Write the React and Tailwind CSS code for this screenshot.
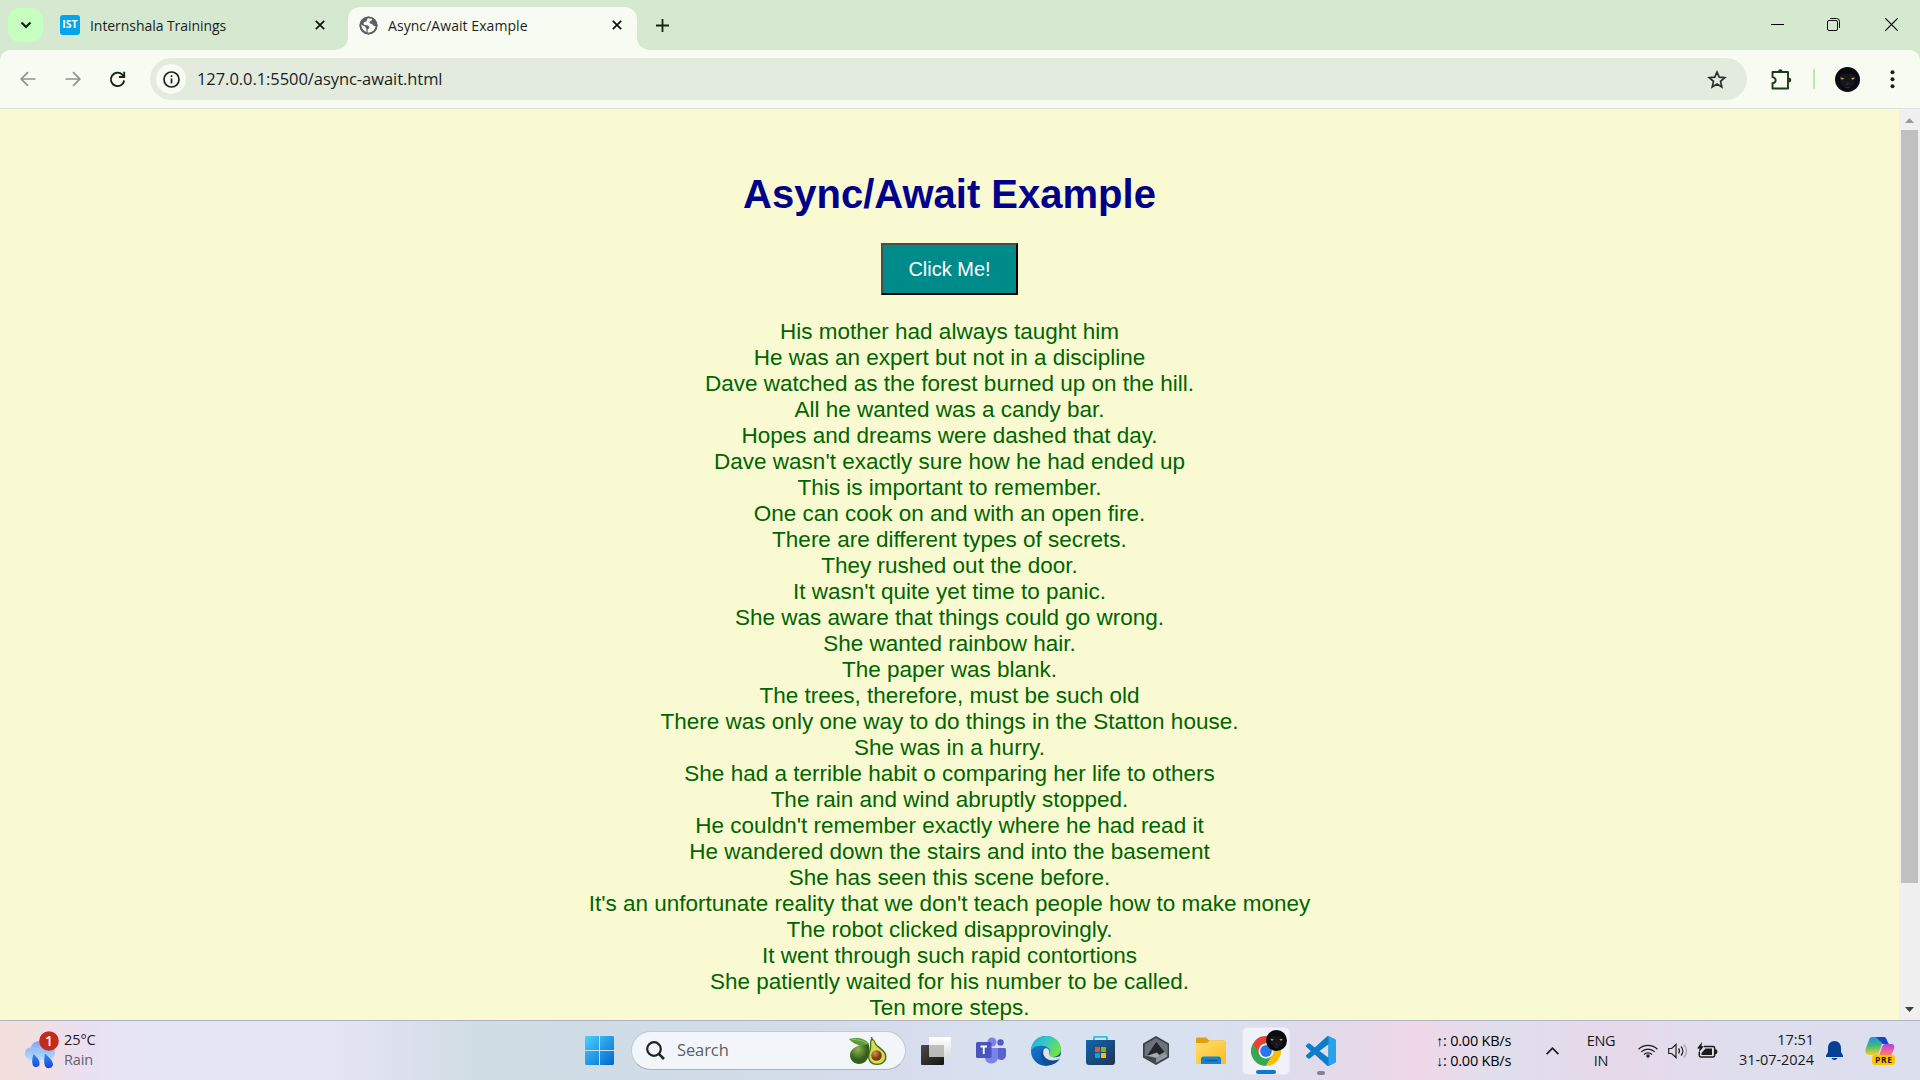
const LINES = [
  "His mother had always taught him",
  "He was an expert but not in a discipline",
  "Dave watched as the forest burned up on the hill.",
  "All he wanted was a candy bar.",
  "Hopes and dreams were dashed that day.",
  "Dave wasn't exactly sure how he had ended up",
  "This is important to remember.",
  "One can cook on and with an open fire.",
  "There are different types of secrets.",
  "They rushed out the door.",
  "It wasn't quite yet time to panic.",
  "She was aware that things could go wrong.",
  "She wanted rainbow hair.",
  "The paper was blank.",
  "The trees, therefore, must be such old",
  "There was only one way to do things in the Statton house.",
  "She was in a hurry.",
  "She had a terrible habit o comparing her life to others",
  "The rain and wind abruptly stopped.",
  "He couldn't remember exactly where he had read it",
  "He wandered down the stairs and into the basement",
  "She has seen this scene before.",
  "It's an unfortunate reality that we don't teach people how to make money",
  "The robot clicked disapprovingly.",
  "It went through such rapid contortions",
  "She patiently waited for his number to be called.",
  "Ten more steps.",
];

function CloseX({ className }) {
  return (
    <svg className={className} width="10" height="10" viewBox="0 0 10 10" stroke="#111" strokeWidth="1.7" fill="none">
      <path d="M.8.8l8.400 8.400M9.200.8L.8 9.200" />
    </svg>
  );
}

function Panther({ size }) {
  return (
    <svg width={size} height={size} viewBox="0 0 25 25">
      <circle cx="12.5" cy="12.5" r="12.5" fill="#0b0c12" />
      <path d="M5 10c2-3 5-4 7.500-2.500C15 6 18 7 20 10l-1 7-6.500 5L6 17z" fill="#16171e" />
      <path d="M5 10.500l4 .5-1 1.500H6.500z" fill="#c99a4e" />
      <path d="M20 10.500l-4 .5 1 1.500h1.500z" fill="#c99a4e" />
      <path d="M10.500 16.500h4l-2 1.800zM9 20c2 1 5 1 7 0" fill="#34353c" />
    </svg>
  );
}

function TabStrip() {
  return (
    <div className="flex h-[50px] bg-[#d5e8d0] pl-2 text-[14px] text-[#1b1f1b]">
      <div className="mt-2 flex h-[34px] w-[35px] items-center justify-center rounded-[12px] bg-[#c7ffc0]">
        <svg width="12" height="8" viewBox="0 0 12 8" fill="none" stroke="#0b200b" strokeWidth="2.200">
          <path d="M1.500 1.500L6 6l4.500-4.500" />
        </svg>
      </div>
      <div className="ml-[17px] flex h-[50px] w-[288px] items-center">
        <div className="flex size-5 items-center justify-center rounded-[3px] bg-[#00a5ec] font-['Open_Sans',sans-serif] text-[10.500px] font-bold text-white">
          IST
        </div>
        <span className="ml-[10px] flex-1 whitespace-nowrap tracking-[-0.060px]">Internshala Trainings</span>
        <CloseX className="mr-[23px]" />
      </div>
      <div className="relative flex h-[50px] w-[289px] items-end">
        <svg className="absolute bottom-0 left-[-14px]" width="317" height="43" viewBox="0 0 317 43" fill="#f8fbf2">
          <path d="M0 43c8 0 14-5 14-13V13C14 5 19 0 27 0h263c8 0 13 5 13 13v17c0 8 6 13 14 13z" />
        </svg>
        <div className="relative flex h-[50px] w-full items-center pl-[11px] pr-[15px]">
          <svg width="19" height="19" viewBox="0 0 19 19">
            <circle cx="9.500" cy="9.500" r="9" fill="#5c6067" />
            <path d="M9 2.200c-1.500 1-.5 2.300-2 3.300-1.300.8-2.500.5-2.500 2 0 1.300 1.200 1.700 2.600 1.700 1.800 0 3.200.6 3.200 2.100 0 1.400-1.700 1.600-1.700 3v2.400c4.500.3 7.800-2.700 8.100-6.600-1.500.3-2.400-.3-2.900-1.400-.7-1.400-2.700-.3-3.200-1.600-.4-1.200.8-2 2-2.600.6-.4.8-1.200.6-1.900C11.800 2.300 10.500 2 9 2.200z" fill="#f8fbf2" />
            <path d="M2 8.500c.3 4 2.800 6.500 5.500 7.500v-2.500c0-1-1-1.500-1-2.500C5.300 9.800 3.500 9.500 2 8.500z" fill="#f8fbf2" />
            <circle cx="9.500" cy="9.500" r="8.200" fill="none" stroke="#5c6067" strokeWidth="1.600" />
          </svg>
          <span className="ml-[10px] flex-1 whitespace-nowrap tracking-[0.060px]">Async/Await Example</span>
          <CloseX />
        </div>
      </div>
      <svg className="ml-[19px] mt-[19px]" width="13" height="13" viewBox="0 0 13 13" stroke="#12260f" strokeWidth="1.800">
        <path d="M6.500 0v13M0 6.500h13" />
      </svg>
      <div className="ml-auto flex h-[50px] items-center pb-px pr-[22px]">
        <svg className="mr-[43px]" width="13" height="13" viewBox="0 0 13 13"><path d="M0 6.500h13" stroke="#000" /></svg>
        <svg className="mr-[45px]" width="13" height="13" viewBox="0 0 13 13" fill="none" stroke="#111">
          <rect x=".5" y="2.500" width="10" height="10" rx="1.500" />
          <path d="M3 .5h6.500a3 3 0 013 3V10" />
        </svg>
        <svg width="13" height="13" viewBox="0 0 13 13" stroke="#000" strokeWidth="1.200"><path d="M.3.3l12.400 12.400M12.700.3L.3 12.700" /></svg>
      </div>
    </div>
  );
}

function Toolbar() {
  return (
    <div className="h-[59px] bg-[#d5e8d0]">
      <div className="flex h-[59px] items-center rounded-t-[10px] border-b border-[#dbe2d8] bg-[#f8fbf2] pl-5 pr-[25px]">
        <svg width="16" height="16" viewBox="0 0 16 16" fill="none" stroke="#8f948d" strokeWidth="1.700"><path d="M15.500 8H1.500M8 1.200L1.200 8 8 14.800" /></svg>
        <svg className="ml-[29px]" width="16" height="16" viewBox="0 0 16 16" fill="none" stroke="#8f948d" strokeWidth="1.700"><path d="M.5 8h14M8 1.200L14.800 8 8 14.800" /></svg>
        <svg className="ml-[28px]" width="17" height="17" viewBox="0 0 17 17" fill="none" stroke="#12260f" strokeWidth="1.900"><path d="M15.200 9.500A6.700 6.700 0 1 1 13.300 3.600L15 5.500" /><path d="M15.200.8V6H10" /></svg>
        <div className="ml-[24px] flex h-[42px] w-[1597px] items-center rounded-full bg-[#e3ebdf] pl-[6px] pr-[20px]">
          <div className="flex size-[30px] items-center justify-center rounded-full bg-[#f8fbf2]">
            <svg width="17" height="17" viewBox="0 0 17 17" fill="none" stroke="#1c211c" strokeWidth="1.700"><circle cx="8.500" cy="8.500" r="7.500" /><path d="M8.500 7.500v5M8.500 4.300v1.800" /></svg>
          </div>
          <span className="ml-[11px] flex-1 pt-px text-[16.500px] tracking-[-0.060px] text-[#1b1f1b]">127.0.0.1:5500/async-await.html</span>
          <svg width="20" height="19" viewBox="0 0 20 19" fill="none" stroke="#2a302a" strokeWidth="1.700"><path d="M10 2l2.200 5.200 5.600.5-4.300 3.700 1.300 5.500-4.800-2.900-4.800 2.900 1.300-5.500L2.200 7.700l5.600-.5z" /></svg>
        </div>
        <svg className="ml-[24px]" width="21" height="21" viewBox="0 0 21 21" fill="none" stroke="#1c3a1a" strokeWidth="1.900" strokeLinejoin="round">
          <path d="M1.500 3h15.500v16.500H1.500v-5.200c4.200-.8 4.200-5.400 0-6.200z" />
          <path d="M7 2.500a2.300 2.300 0 014.600 0zM18 8.800a2.300 2.300 0 010 4.600z" fill="#1c3a1a" stroke="none" />
        </svg>
        <div className="ml-[21px] h-5 w-[2px] bg-[#aef0a6]" />
        <div className="ml-[20px]"><Panther size={25} /></div>
        <svg className="ml-auto" width="5" height="19" viewBox="0 0 5 19" fill="#12260f"><circle cx="2.500" cy="2.300" r="2" /><circle cx="2.500" cy="9.300" r="2" /><circle cx="2.500" cy="16.300" r="2" /></svg>
      </div>
    </div>
  );
}

function PageContent() {
  return (
    <div className="flex h-[911px] overflow-hidden bg-[#fafad2]">
      <main className="flex w-[1899px] flex-col items-center font-['Liberation_Sans',Arial,sans-serif]">
        <h1 className="mt-[62px] shrink-0 text-[40px] font-bold leading-[46px] text-[#00008b]">Async/Await Example</h1>
        <button className="mt-[26px] h-[52px] w-[137px] shrink-0 border-2 border-b-black border-l-[#4c4c4c] border-r-black border-t-[#4c4c4c] bg-[#008b8b] text-[20px] text-white">
          Click Me!
        </button>
        <div className="mt-[24px] shrink-0 whitespace-nowrap text-center text-[22.500px] leading-[26px] text-[#006400]">
          {LINES.map((line) => (
            <p key={line}>{line}</p>
          ))}
        </div>
      </main>
      <div className="flex w-[21px] flex-col items-center bg-[#f0f0f0] pt-[9px]">
        <svg width="9" height="5" viewBox="0 0 9 5" fill="#9a9a9a"><path d="M4.500 0L9 5H0z" /></svg>
        <div className="mt-[7px] h-[753px] w-[17px] bg-[#c0c0c0]" />
        <svg className="mb-[8px] mt-auto" width="9" height="5" viewBox="0 0 9 5" fill="#404040"><path d="M0 0h9L4.500 5z" /></svg>
      </div>
    </div>
  );
}

function Weather() {
  return (
    <div className="flex h-full w-[150px] items-center pb-[2px] pl-[25px]">
      <svg width="35" height="38" viewBox="0 0 35 38">
        <defs>
          <linearGradient id="cloud" x2="0" y2="1"><stop stopColor="#7fa5ea" /><stop offset="1" stopColor="#b5dcff" /></linearGradient>
          <linearGradient id="drop" x2="0" y2="1"><stop stopColor="#2b8bf2" /><stop offset="1" stopColor="#1747e0" /></linearGradient>
        </defs>
        <path d="M7 29c-4 0-7-2.500-7-6.500S3 16.500 6 16.500C7 9 18 8 21 15c5-1 9 2 9 6.500S27 29 23 29z" fill="url(#cloud)" />
        <path d="M4 18c4-2 9-1 12 3M14 20c3-4 10-5 15-1" fill="none" stroke="#9dc4f6" strokeWidth="1.500" />
        <path d="M8.500 23c3 3 6 5.500 6 9a3.500 3.500 0 01-7 1c-.8-3 0-6.500 1-10zM20 22.500c4 4 8 7 8 11a4.300 4.300 0 01-8 1.500c-1.200-3-.8-8 0-12.500z" fill="url(#drop)" />
        <circle cx="24" cy="10" r="9.800" fill="#c42b1c" />
        <text x="24" y="15" fontSize="14" fontWeight="600" textAnchor="middle" fill="#fff" fontFamily="Open Sans, sans-serif">1</text>
      </svg>
      <div className="ml-[4px] text-[14.500px] leading-5 tracking-[-0.100px]">
        <div>25°C</div>
        <div className="text-[#62626c]">Rain</div>
      </div>
    </div>
  );
}

function Avocado() {
  return (
    <svg width="38" height="28" viewBox="0 0 38 28">
      <defs>
        <radialGradient id="avo" cx=".4" cy=".3"><stop stopColor="#8eb552" /><stop offset="1" stopColor="#355e1c" /></radialGradient>
        <radialGradient id="pit" cx=".35" cy=".3"><stop stopColor="#d59358" /><stop offset="1" stopColor="#7d3912" /></radialGradient>
      </defs>
      <path d="M1 18C1 10 13 7 19 6c3 5 2 21-9 21-5 0-9-4-9-9z" fill="url(#avo)" />
      <path d="M0 2c8-2 16-1 20 5-8 3-15 1-20-5z" fill="#5c9b3a" /><path d="M3 2.500c6 0 11 1 15 4" stroke="#96c665" fill="none" />
      <path d="M22.500 1.500c1.500 0 3 1.500 4 4 1.500 4 11 7 11 14 0 5.500-4 8.500-9.500 8.500s-9-3.500-9-8.500c0-4 2-6 2-10s0-7 1.500-8z" fill="#416e20" />
      <path d="M23 3c1.300 0 2 1.500 2.700 3.500 1.600 4.500 10.300 7 10.300 13 0 4.700-3.500 7.200-8 7.200s-7.700-3-7.700-7.200c0-3.500 2-6 2-10 0-3-.3-5.500.7-6.500z" fill="#d9dc4e" />
      <circle cx="27.500" cy="18.500" r="5.300" fill="url(#pit)" /><path d="M22.500 0l.8 3.500" stroke="#8a5a2c" strokeWidth="1.500" />
    </svg>
  );
}

function TaskIcons() {
  return (
    <div className="flex h-full items-center">
      <svg width="29" height="29" viewBox="0 0 29 29">
        <defs><linearGradient id="win" x2="1" y2="1"><stop stopColor="#4ad0ff" /><stop offset="1" stopColor="#0067cc" /></linearGradient></defs>
        <path d="M1 0h13v14H0V1zM15 0h13l1 1v13H15zM0 15h14v14H1l-1-1zM15 15h14v13l-1 1H15z" fill="url(#win)" />
      </svg>
      <div className="ml-[17px] flex h-[39px] w-[275px] items-center rounded-full border border-[#c0c9d6] border-b-[#a9b2c2] bg-[#f2f5f9] pl-[14px] pr-[18px]">
        <svg width="19" height="19" viewBox="0 0 19 19" fill="none" stroke="#222" strokeWidth="2.200"><circle cx="8" cy="8" r="6.800" /><path d="M12.800 12.800l5.200 5.200" strokeWidth="2.600" /></svg>
        <span className="ml-[12px] flex-1 text-[16.500px] tracking-[-0.100px] text-[#5c5f63]">Search</span>
        <Avocado />
      </div>
      <svg className="ml-[15px]" width="30" height="28" viewBox="0 0 30 28">
        <defs>
          <linearGradient id="tvd" x2="1" y2="1"><stop stopColor="#4a4a48" /><stop offset="1" stopColor="#151515" /></linearGradient>
          <linearGradient id="tvl" x2="0" y2="1"><stop stopColor="#fff" /><stop offset="1" stopColor="#ddd" /></linearGradient>
        </defs>
        <rect y="8" width="23" height="20" rx="1" fill="url(#tvd)" />
        <rect x="8" width="22" height="20" rx="1" fill="url(#tvl)" />
        <path d="M8 8h15v12H8z" fill="#aaa" opacity=".7" />
      </svg>
      <svg className="ml-[25px]" width="30" height="27" viewBox="0 0 30 27">
        <circle cx="16" cy="5" r="4.500" fill="#7b83eb" /><circle cx="24.500" cy="5.500" r="3.200" fill="#5059c9" />
        <path d="M20 11h8.500c1 0 1.500.5 1.500 1.500V18c0 6-7 6-9 3z" fill="#5b62cf" />
        <path d="M9 11h13v9c0 8-12 9-13 1z" fill="#7b83eb" />
        <rect y="5" width="15.500" height="16" rx="1.500" fill="#4b53bc" />
        <path d="M4.500 9.500h6.500M7.750 9.500v7.500" stroke="#fff" strokeWidth="1.900" />
      </svg>
      <svg className="ml-[25px]" width="30" height="30" viewBox="0 0 30 30">
        <defs>
          <linearGradient id="edg" x2="1" y2=".5"><stop stopColor="#1fa6e6" /><stop offset=".5" stopColor="#35c9c2" /><stop offset="1" stopColor="#71e04c" /></linearGradient>
          <linearGradient id="edb" x2=".6" y2="1"><stop stopColor="#1b87dc" /><stop offset="1" stopColor="#0b4fa0" /></linearGradient>
        </defs>
        <circle cx="15" cy="15" r="15" fill="url(#edb)" />
        <path d="M0 14C1 5 7 0 15 0c9 0 15 6 15 13 0 5-4 8-8 8-3 0-5-1-4-3 2-2 1-7-5-8C8 9 3 10 0 14z" fill="url(#edg)" />
        <path d="M12 13c-5 6-1 16 9 15.500 3-.5 6-3 8-6-8 4-15 0-17-9.500z" fill="#124f91" />
        <path d="M12.500 14c2-4 7-1 5.500 3.500 0 4 6 5 11.500 2.500L28 23c-8 4-18-1-15.500-9z" fill="#dbe1f0" />
      </svg>
      <svg className="ml-[25px]" width="29" height="29" viewBox="0 0 29 29">
        <defs><linearGradient id="sto" x2="1" y2="1"><stop stopColor="#0d67ae" /><stop offset="1" stopColor="#243252" /></linearGradient></defs>
        <path d="M8 5V2c0-1 .5-1.300 1.300-1.300h10.400c.8 0 1.300.3 1.300 1.300v3" fill="none" stroke="#31bdf0" strokeWidth="2" />
        <path d="M0 4h29v22c0 2-1 3-3 3H3c-2 0-3-1-3-3z" fill="url(#sto)" />
        <path d="M9 11h5v5H9z" fill="#f25022" /><path d="M15 11h5v5h-5z" fill="#7fba00" /><path d="M9 17h5v5H9z" fill="#00a4ef" /><path d="M15 17h5v5h-5z" fill="#ffb900" />
      </svg>
      <svg className="ml-[28px]" width="26" height="29" viewBox="0 0 26 29">
        <defs><linearGradient id="hexl" x2="1" y2="1"><stop stopColor="#5f676e" /><stop offset=".5" stopColor="#767d84" /><stop offset="1" stopColor="#aab0b7" /></linearGradient></defs>
        <path d="M13 0l13 7.500v14L13 29 0 21.500v-14z" fill="#3b4046" />
        <path d="M13 2l11.300 6.500v12L13 27 1.700 20.500v-12z" fill="url(#hexl)" />
        <path d="M13.500 5.500L4 19.500l9 1.500 9-5.500z" fill="#23272b" />
        <path d="M3.500 20l10.500-3.500 3 3.500-4 1.500z" fill="#a4abb1" />
        <path d="M13.500 3v3l8 10 2.800 4.500v-12z" fill="#6c747b" />
        <path d="M4 20l9 2v5L1.700 20.500z" fill="#3f454b" />
      </svg>
      <svg className="ml-[27px]" width="30" height="27" viewBox="0 0 30 27">
        <defs><linearGradient id="fol" x2="1" y2="1"><stop stopColor="#ffdf70" /><stop offset="1" stopColor="#f9bd1d" /></linearGradient></defs>
        <path d="M0 2C0 1 .5.500 1.500.500H10L13 3.500h15V8H0z" fill="#e2a00c" />
        <path d="M0 6h11l3-2.500h15c.7 0 1 .5 1 1V26c0 .7-.5 1-1 1H1c-.7 0-1-.5-1-1z" fill="url(#fol)" />
        <path d="M5 27v-5c0-1.500 1-2.500 2.500-2.500h15c1.500 0 2.500 1 2.500 2.500v5z" fill="#1582d8" /><path d="M9 23.500h12" stroke="#0c59a4" strokeWidth="1.500" />
      </svg>
      <div className="relative ml-[16px] flex size-[48px] items-center justify-center rounded-[5px] border border-[#e7e6f0] bg-[#f1f1f9]">
        <svg width="30" height="30" viewBox="0 0 30 30">
          <path d="M2 7.500A15 15 0 0015 30l6.500-11.200L15 15z" fill="#34a853" />
          <path d="M28 7.500A15 15 0 0115 30l6.500-11.200V7.500z" fill="#fbbc05" />
          <path d="M2 7.500L8.500 18.800 15 7.500h13A15 15 0 002 7.500z" fill="#ea4335" />
          <circle cx="15" cy="15" r="7.500" fill="#fff" /><circle cx="15" cy="15" r="5.900" fill="#2a78e8" />
        </svg>
        <div className="absolute right-[2px] top-[2px]"><Panther size={21} /></div>
        <div className="absolute bottom-0 left-[13px] h-1 w-5 rounded-full bg-[#0a78d4]" />
      </div>
      <div className="relative ml-[16px]">
        <svg width="30" height="30" viewBox="0 0 24 24">
          <path d="M23.150 2.587L18.210.210a1.494 1.494 0 0 0-1.705.290l-9.460 8.630-4.120-3.128a.999.999 0 0 0-1.276.057L.327 7.261A1 1 0 0 0 .326 8.740L3.899 12 .326 15.260a1 1 0 0 0 .001 1.479L1.650 17.940a.999.999 0 0 0 1.276.057l4.120-3.128 9.460 8.630a1.492 1.492 0 0 0 1.704.290l4.942-2.377A1.500 1.500 0 0 0 24 20.060V3.939a1.500 1.500 0 0 0-.850-1.352zm-5.146 14.861L10.826 12l7.178-5.448v10.896z" fill="#0b7dc9" />
          <path d="M23.150 2.587L18.004.1v23.800l5.148-2.487A1.500 1.500 0 0 0 24 20.060V3.939a1.500 1.500 0 0 0-.850-1.352z" fill="#25a3ee" />
        </svg>
        <div className="absolute left-[11px] top-[35px] h-1 w-2 rounded-full bg-[#85828d]" />
      </div>
    </div>
  );
}

function Tray() {
  return (
    <div className="ml-auto flex h-full items-center pr-[24px] text-[14.500px] leading-5">
      <div className="w-[75px] whitespace-nowrap tracking-[-0.220px] text-black">
        <div>↑: 0.00 KB/s</div>
        <div>↓: 0.00 KB/s</div>
      </div>
      <svg className="ml-[35px]" width="13" height="8" viewBox="0 0 13 8" fill="none" stroke="#1b1b1b" strokeWidth="1.700"><path d="M.6 7.200l5.900-6 5.900 6" /></svg>
      <div className="ml-[27px] w-[30px] text-center tracking-[-0.300px]"><div>ENG</div><div>IN</div></div>
      <svg className="ml-[22px]" width="20" height="15" viewBox="0 0 20 15" fill="none" stroke="#1b1b1b" strokeWidth="1.300">
        <path d="M.6 6.200a13.300 13.300 0 0118.800 0M3.300 8.900a9.500 9.500 0 0113.400 0M6 11.500a5.700 5.700 0 018 0" /><circle cx="10" cy="13" r="1.700" fill="#1b1b1b" stroke="none" />
      </svg>
      <svg className="ml-[10px]" width="20" height="16" viewBox="0 0 20 16" fill="none" stroke="#222" strokeWidth="1.200">
        <path d="M.7 5.500h3L8 1.500v13l-4.300-4h-3zM10.500 5.500c1.300 1.500 1.300 3.500 0 5M13 3.500c2.500 2.500 2.500 6.500 0 9" /><path d="M15.500 1.500c4 3.500 4 9.500 0 13" stroke="#a9a7b2" />
      </svg>
      <svg className="ml-[9px]" width="21" height="17" viewBox="0 0 21 17" fill="none" stroke="#1b1b1b" strokeWidth="1.500">
        <path d="M7 4.500h9c1 0 1.700.7 1.700 1.700v7c0 1-.7 1.700-1.700 1.700H4c-1 0-1.700-.7-1.700-1.700V10" /><path d="M8.500 6.500h6.500v6.500H4.500V11z" fill="#1b1b1b" stroke="none" /><path d="M18 7.500h1.200c1.500 0 1.500 4.500 0 4.500H18z" fill="#1b1b1b" stroke="none" /><path d="M5 0L0 6.500h2.500L1.800 10.500 7 4.200H4.500z" fill="#1b1b1b" stroke="none" />
      </svg>
      <div className="ml-[18px] mr-px w-[78px] whitespace-nowrap pb-[2px] text-right tracking-[-0.060px]"><div>17:51</div><div>31-07-2024</div></div>
      <svg className="ml-[11px]" width="17" height="20" viewBox="0 0 17 20" fill="#063f96"><path d="M8.500 0C4.500 0 2 3 2 7v4L0 14.500V16h17v-1.500L15 11V7c0-4-2.500-7-6.500-7zM5.500 17c1 2.500 5 2.500 6 0z" /></svg>
      <svg className="ml-[22px]" width="31" height="30" viewBox="0 0 31 30">
        <defs>
          <linearGradient id="cpa" x2=".1" y2="1"><stop stopColor="#1c8ef0" /><stop offset=".5" stopColor="#3fb879" /><stop offset="1" stopColor="#f2d02b" /></linearGradient>
          <linearGradient id="cpb" x2="0" y2="1"><stop stopColor="#a247f0" /><stop offset=".5" stopColor="#ef5c9f" /><stop offset="1" stopColor="#fb8a4a" /></linearGradient>
        </defs>
        <path d="M7 1h12c3 0 3 6 5 7h-7l-4 11H4C0 19 0 15 1 12L4 4c.5-2 1.500-3 3-3z" fill="url(#cpa)" />
        <path d="M11 1h8c3 0 3 6 5 7h-6z" fill="#1646c8" />
        <path d="M20 8h6c3 0 4 2 3 5l-3 7H13c3-1 3-12 7-12z" fill="url(#cpb)" />
        <rect x="7" y="19" width="23" height="10" rx="3" fill="#ffc400" />
        <text x="18.500" y="27" fontSize="8.500" fontWeight="700" textAnchor="middle" fill="#1b1b1b" fontFamily="Open Sans, sans-serif" textLength="17">PRE</text>
      </svg>
    </div>
  );
}

export default function App() {
  return (
    <div className="h-[1080px] w-[1920px] overflow-hidden font-['Open_Sans','Noto_Sans',sans-serif]">
      <TabStrip />
      <Toolbar />
      <PageContent />
      <div className="flex h-[60px] border-t border-[#b0b3c0] bg-[linear-gradient(90deg,#f2dfdb_0px,#f0dfe4_50px,#ecdff0_75px,#e6e4f5_120px,#e5e5f5_330px,#dbe0ec_410px,#d1dde4_470px,#d0dce6_650px,#d6dcec_900px,#d8e1ef_1000px,#d8e1f0_1200px,#e2daea_1330px,#efd7e9_1420px,#dfdeec_1500px,#e6d9ea_1620px,#e0deed_1720px,#dbdfee_1920px)] text-[#1b1b1b]">
        <Weather />
        <div className="ml-[435px]"><TaskIcons /></div>
        <Tray />
      </div>
    </div>
  );
}
